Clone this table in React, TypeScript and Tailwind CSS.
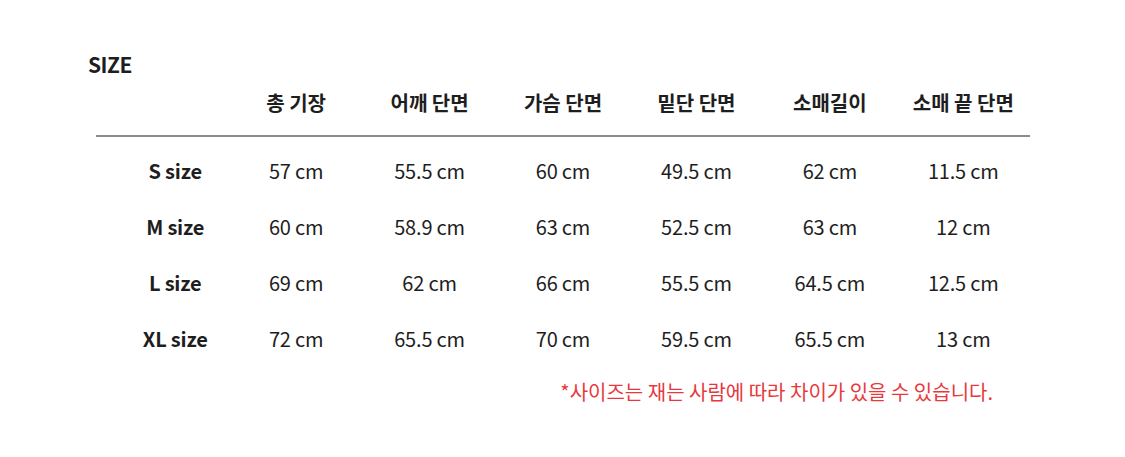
const columns = ['총 기장', '어깨 단면', '가슴 단면', '밑단 단면', '소매길이', '소매 끝 단면']

const rows: { label: string; values: string[] }[] = [
  { label: 'S size', values: ['57 cm', '55.5 cm', '60 cm', '49.5 cm', '62 cm', '11.5 cm'] },
  { label: 'M size', values: ['60 cm', '58.9 cm', '63 cm', '52.5 cm', '63 cm', '12 cm'] },
  { label: 'L size', values: ['69 cm', '62 cm', '66 cm', '55.5 cm', '64.5 cm', '12.5 cm'] },
  { label: 'XL size', values: ['72 cm', '65.5 cm', '70 cm', '59.5 cm', '65.5 cm', '13 cm'] },
]

export default function App() {
  return (
    <div
      className="h-[457px] w-[1125px] bg-white text-[#1e1e1e]"
      style={{ fontFamily: '"Noto Sans CJK KR", "Noto Sans", sans-serif' }}
    >
      <div className="pl-[88px] pt-[50px] text-[21px] font-bold leading-[28px] tracking-[-0.5px]">SIZE</div>

      <div className="ml-[96px] w-[934px]">
        {/* header */}
        <div className="grid h-[59px] grid-cols-7 items-center border-b-2 border-[#8c8c8c] pb-[7px] text-[20px] font-bold">
          <div />
          {columns.map((c) => (
            <div key={c} className="text-center">
              {c}
            </div>
          ))}
        </div>

        {/* body */}
        <div className="pt-[6px]">
          {rows.map((r) => (
            <div key={r.label} className="grid h-[56px] grid-cols-7 items-center text-[20px] tracking-[-0.2px]">
              <div className="pl-[25px] text-center font-bold">{r.label}</div>
              {r.values.map((v, i) => (
                <div key={i} className="text-center">
                  {v}
                </div>
              ))}
            </div>
          ))}
        </div>

        <div className="mt-[10px] pr-[37px] text-right text-[20px] leading-[30px] text-[#e8383d]">
          *사이즈는 재는 사람에 따라 차이가 있을 수 있습니다.
        </div>
      </div>
    </div>
  )
}
